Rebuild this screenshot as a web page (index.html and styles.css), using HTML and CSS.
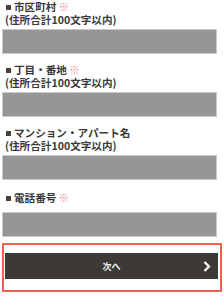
FILE: index.html
```html
<!DOCTYPE html>
<html lang="ja">
<head>
    <meta charset="UTF-8">
    <meta name="viewport" content="width=device-width, initial-scale=1.0">
    <title>住所入力</title>
    <link rel="stylesheet" href="styles.css">
</head>
<body>
    <div class="form">
        <!-- 市区町村 -->
        <div class="field">
            <p class="label"><span class="mark"></span>市区町村<span class="req">※</span><br>(住所合計100文字以内)</p>
            <div class="input"></div>
        </div>
        <!-- 丁目・番地 -->
        <div class="field">
            <p class="label"><span class="mark"></span>丁目・番地<span class="req">※</span><br>(住所合計100文字以内)</p>
            <div class="input"></div>
        </div>
        <!-- マンション -->
        <div class="field">
            <p class="label"><span class="mark"></span>マンション・アパート名<br>(住所合計100文字以内)</p>
            <div class="input"></div>
        </div>
        <!-- 電話番号 -->
        <div class="field field-tel">
            <p class="label"><span class="mark"></span>電話番号<span class="req">※</span></p>
            <div class="input"></div>
        </div>
    </div>
    <div class="next-box">
        <div class="next-btn">
            <span class="next-text">次へ</span>
            <span class="next-arrow">
                <svg width="8" height="11" viewBox="0 0 8 11"><path d="M1.5 1 L6 5.5 L1.5 10" fill="none" stroke="#fff" stroke-width="2.2"/></svg>
            </span>
        </div>
    </div>
</body>
</html>
```
FILE: styles.css
```css
body {
    margin: 0;
    padding: 0;
    background: #fff;
    font-family: "Noto Sans CJK JP", "Noto Sans", sans-serif;
}
.form {
    padding: 0 7px 0 2px;
}
.field {
    margin-bottom: 9px;
}
.label {
    margin: 0 0 3px;
    padding-left: 3px;
    font-size: 10.6px;
    line-height: 13px;
    font-weight: bold;
    color: #3a3a3a;
}
.mark {
    display: inline-block;
    width: 5px;
    height: 5px;
    margin: 0 3px 1px 1px;
    background: #4a403a;
    vertical-align: middle;
}
.req {
    color: #e88a8a;
    font-weight: normal;
    margin-left: 2px;
}
.input {
    height: 23px;
    background: #969696;
    border: 1px solid #c9c9c9;
}
.field-tel {
    margin-top: 11px;
    margin-bottom: 0;
}
.field-tel .label {
    margin-bottom: 8px;
}
.next-box {
    margin: 6px 2px 5px 2px;
    border: 2px solid #f0614d;
    padding: 8px 2px 11px 1px;
}
.next-btn {
    position: relative;
    height: 26px;
    background: #3d3934;
    display: flex;
    align-items: center;
    justify-content: center;
}
.next-text {
    color: #f4f4f4;
    font-size: 9px;
    font-weight: bold;
}
.next-arrow {
    position: absolute;
    right: 7px;
    top: 0;
    bottom: 0;
    display: flex;
    align-items: center;
}
.next-arrow svg {
    display: block;
}
```
